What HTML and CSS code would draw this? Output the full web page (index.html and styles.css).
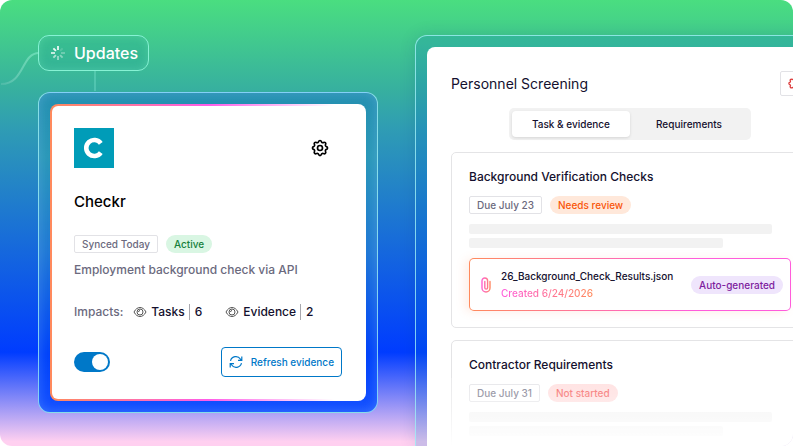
FILE: index.html
```html
<!DOCTYPE html>
<html lang="en">
<head>
    <meta charset="UTF-8">
    <meta name="viewport" content="width=device-width, initial-scale=1.0">
    <title>Personnel Screening</title>
    <link rel="stylesheet" href="styles.css">
</head>
<body>
    <main class="stage">
        <div class="left">
            <div class="updates">
                <svg class="link-line" width="38" height="36" viewBox="0 0 38 36" fill="none">
                    <path d="M0 33C24 33 20 2 38 2" stroke="url(#lineFade)" stroke-width="2"/>
                    <defs>
                        <linearGradient id="lineFade" x1="0" y1="0" x2="1" y2="0">
                            <stop offset="0" stop-color="#fff" stop-opacity="0.1"/>
                            <stop offset="1" stop-color="#8ff5d8" stop-opacity="0.5"/>
                        </linearGradient>
                    </defs>
                </svg>
                <svg width="16" height="16" viewBox="0 0 16 16" stroke="#fff" stroke-width="1.8">
                    <path d="M8 1v4" opacity="0.9"/>
                    <path d="M12.6 3.4l-2.5 2.5" opacity="0.15"/>
                    <path d="M15 8h-4" opacity="0.3"/>
                    <path d="M12.6 12.6l-2.5-2.5" opacity="0.4"/>
                    <path d="M8 15v-4" opacity="0.5"/>
                    <path d="M3.4 12.6l2.5-2.5" opacity="0.6"/>
                    <path d="M1 8h4" opacity="0.8"/>
                    <path d="M3.4 3.4l2.5 2.5" opacity="0.9"/>
                </svg>
                <span>Updates</span>
            </div>

            <section class="frame">
                <div class="card">
                    <div class="card-top">
                        <svg width="40" height="40" viewBox="0 0 40 40" fill="none">
                            <rect width="40" height="40" fill="#009cb8"/>
                            <path d="M26.800 15.400A8 8 0 1 0 26.800 24.600" stroke="#fff" stroke-width="4.600"/>
                        </svg>
                        <button class="icon-btn" aria-label="Settings">
                            <svg width="20" height="20" viewBox="0 0 24 24" fill="none" stroke="#000" stroke-width="2" stroke-linecap="round" stroke-linejoin="round">
                                <path d="M10.3 4.3c.4-1.8 3-1.8 3.4 0a1.7 1.7 0 0 0 2.6 1.1c1.5-.9 3.3.8 2.4 2.4a1.7 1.7 0 0 0 1 2.5c1.8.4 1.8 3 0 3.4a1.7 1.7 0 0 0-1 2.6c.9 1.5-.9 3.3-2.4 2.4a1.7 1.7 0 0 0-2.6 1c-.4 1.8-3 1.8-3.4 0a1.7 1.7 0 0 0-2.6-1c-1.5.9-3.3-.9-2.4-2.4a1.7 1.7 0 0 0-1-2.6c-1.8-.4-1.8-3 0-3.4a1.7 1.7 0 0 0 1-2.5c-.9-1.6.9-3.3 2.4-2.4 1 .6 2.3.1 2.6-1.1z"/>
                                <circle cx="12" cy="12" r="3"/>
                            </svg>
                        </button>
                    </div>
                    <h1>Checkr</h1>
                    <div class="chips">
                        <span class="chip">Synced Today</span>
                        <span class="chip pill green">Active</span>
                    </div>
                    <p class="desc">Employment background check via API</p>
                    <div class="impacts">
                        <span class="impacts-label">Impacts:</span>
                        <div class="impact">
                            <svg width="14" height="12" viewBox="0 0 14 12" fill="none" stroke="#555" stroke-width="1">
                                <path d="M1 6C2.600 3 4.600 1.500 7 1.500S11.400 3 13 6C11.400 9 9.400 10.500 7 10.500S2.600 9 1 6z"/>
                                <circle cx="7" cy="6" r="3"/>
                                <path d="M5.500 6A1.500 1.500 0 0 1 7 4.500"/>
                            </svg>
                            <span>Tasks</span>
                            <span class="count">6</span>
                        </div>
                        <div class="impact">
                            <svg width="14" height="12" viewBox="0 0 14 12" fill="none" stroke="#555" stroke-width="1">
                                <path d="M1 6C2.600 3 4.600 1.500 7 1.500S11.400 3 13 6C11.400 9 9.400 10.500 7 10.500S2.600 9 1 6z"/>
                                <circle cx="7" cy="6" r="3"/>
                                <path d="M5.500 6A1.500 1.500 0 0 1 7 4.500"/>
                            </svg>
                            <span>Evidence</span>
                            <span class="count">2</span>
                        </div>
                    </div>
                    <div class="card-bottom">
                        <input type="checkbox" class="toggle" aria-label="Enable Checkr" checked>
                        <button class="refresh-btn">
                            <svg width="14" height="14" viewBox="0 0 14 14" fill="none" stroke="#0078c8" stroke-width="1.200">
                                <path d="M1.500 5.800A5.500 5.500 0 0 1 11.500 4.200L12.800 5.400M12.800 1.500V5.400H9"/>
                                <path d="M12.500 8.200A5.500 5.500 0 0 1 2.500 9.800L1.200 8.600M1.200 12.500V8.600H5"/>
                            </svg>
                            Refresh evidence
                        </button>
                    </div>
                </div>
            </section>
        </div>

        <section class="frame screening">
            <div class="panel">
                <div class="panel-header">
                    <h2>Personnel Screening</h2>
                    <button class="alert-btn" aria-label="Panel settings">
                        <svg width="15" height="15" viewBox="0 0 24 24" fill="none" stroke="#dc3c3c" stroke-width="2">
                            <path d="M10.3 4.3c.4-1.8 3-1.8 3.4 0a1.7 1.7 0 0 0 2.6 1.1c1.5-.9 3.3.8 2.4 2.4a1.7 1.7 0 0 0 1 2.5c1.8.4 1.8 3 0 3.4a1.7 1.7 0 0 0-1 2.6c.9 1.5-.9 3.3-2.4 2.4a1.7 1.7 0 0 0-2.6 1c-.4 1.8-3 1.8-3.4 0a1.7 1.7 0 0 0-2.6-1c-1.5.9-3.3-.9-2.4-2.4a1.7 1.7 0 0 0-1-2.6c-1.8-.4-1.8-3 0-3.4a1.7 1.7 0 0 0 1-2.5c-.9-1.6.9-3.3 2.4-2.4 1 .6 2.3.1 2.6-1.1z"/>
                        </svg>
                    </button>
                </div>
                <div class="tabs">
                    <button class="tab active">Task &amp; evidence</button>
                    <button class="tab">Requirements</button>
                </div>
                <article class="task">
                    <h3>Background Verification Checks</h3>
                    <div class="chips">
                        <span class="chip">Due July 23</span>
                        <span class="chip pill orange">Needs review</span>
                    </div>
                    <div class="lines">
                        <div class="line"></div>
                        <div class="line short"></div>
                    </div>
                    <div class="file">
                        <svg width="10" height="16" viewBox="0 0 10 16" fill="none" stroke="url(#clipFade)" stroke-width="1.400" stroke-linecap="round">
                            <path d="M9 4.500V11A4 4 0 0 1 1 11V3.800A2.800 2.800 0 0 1 6.600 3.800V10.700A1.400 1.400 0 0 1 3.800 10.700V4.500"/>
                            <defs>
                                <linearGradient id="clipFade" x1="0" y1="0" x2="10" y2="0" gradientUnits="userSpaceOnUse">
                                    <stop stop-color="#ff5cdc"/>
                                    <stop offset="1" stop-color="#ff8a5c"/>
                                </linearGradient>
                            </defs>
                        </svg>
                        <div class="file-info">
                            <div class="file-name">26_Background_Check_Results.json</div>
                            <div class="file-date">Created 6/24/2026</div>
                        </div>
                        <span class="chip pill purple">Auto-generated</span>
                    </div>
                </article>
                <article class="task">
                    <h3>Contractor Requirements</h3>
                    <div class="chips">
                        <span class="chip">Due July 31</span>
                        <span class="chip pill red">Not started</span>
                    </div>
                    <div class="lines">
                        <div class="line"></div>
                        <div class="line short"></div>
                    </div>
                </article>
            </div>
        </section>
    </main>
</body>
</html>
```
FILE: styles.css
```css
* { margin: 0; padding: 0; box-sizing: border-box; }
body {
    font-family: Inter, "Liberation Sans", sans-serif;
    font-weight: 500;
    color: #14102e;
    background: white;
}
button { font: inherit; color: inherit; cursor: pointer; }
svg { display: block; flex: none; }
.stage {
    display: flex;
    gap: 37px;
    height: 100vh;
    padding: 35px 0 0 38px;
    border-radius: 12px;
    overflow: hidden;
    background: linear-gradient(180deg, #4ade80 0%, #37b09f 20%, #2f9cb4 29%, #003cff 79%, #ffd0f0 99%);
}
.left { flex: none; width: 340px; }

.updates {
    position: relative;
    display: flex;
    align-items: center;
    gap: 8px;
    width: 111px;
    height: 36px;
    margin-bottom: 21px;
    padding-left: 11px;
    border: 1px solid #86f2d4;
    border-radius: 11px;
    background: rgba(40, 170, 150, 0.35);
    box-shadow: inset 0 0 8px rgba(120, 240, 190, 0.3);
    color: white;
    font-size: 16px;
}
.updates::after {
    content: '';
    position: absolute;
    top: 100%;
    left: 50%;
    width: 2px;
    height: 21px;
    background: rgba(140, 240, 220, 0.3);
}
.link-line { position: absolute; right: 100%; top: 15px; }

.frame {
    padding: 11px;
    border: 1px solid rgba(160, 240, 245, 0.8);
    border-radius: 12px;
    background: linear-gradient(180deg, #2490b0 0%, #2a98b8 20%, #1f78d6 50%, #0042fa 82%, #1450ff 100%);
    box-shadow: inset 0 0 12px rgba(150, 200, 255, 0.3);
}
.card {
    padding: 22px;
    border: 2px solid transparent;
    border-radius: 8px;
    background:
        linear-gradient(white, white) padding-box,
        linear-gradient(90deg, #ff8a5c 0%, #ff5ce8 50%, white 90%) border-box;
}
.card-top { display: flex; justify-content: space-between; }
.icon-btn {
    display: flex;
    align-items: center;
    justify-content: center;
    width: 44px;
    height: 40px;
    border: none;
    background: none;
}
h1 { margin: 22px 0; font-size: 15px; line-height: 23px; font-weight: 500; color: black; }
.chips { display: flex; gap: 8px; }
.chip {
    height: 18px;
    padding: 0 7px;
    border: 1px solid #e2e2e6;
    border-radius: 2px;
    font-size: 10px;
    line-height: 16px;
    color: #6b6a7e;
    white-space: nowrap;
}
.pill { border-color: transparent; border-radius: 9px; }
.green { background: #d9f6e3; color: #16803c; }
.orange { background: #ffe8da; color: #f9560b; }
.purple { background: #efe5fc; color: #7e1d9e; }
.red { background: #ffdada; color: #f4504e; }
.desc { margin-top: 8px; font-size: 12px; line-height: 18px; color: #6b6a7e; }
.impacts {
    display: flex;
    align-items: center;
    margin: 25px 0 27px;
    font-size: 12px;
    line-height: 16px;
}
.impacts-label { margin-right: 10px; color: #6b6a7e; }
.impact { display: flex; align-items: center; gap: 4px; margin-right: 23px; }
.count { padding-left: 5px; border-left: 1px solid #a8a8ae; }
.card-bottom { display: flex; align-items: center; justify-content: space-between; }
.toggle {
    appearance: none;
    display: flex;
    justify-content: flex-end;
    width: 36px;
    height: 20px;
    padding: 2px;
    border-radius: 10px;
    background: #0078c8;
    cursor: pointer;
}
.toggle::before {
    content: '';
    width: 16px;
    height: 16px;
    border-radius: 50%;
    background: white;
}
.toggle:not(:checked) { justify-content: flex-start; background: #a8a8ae; }
.refresh-btn {
    display: flex;
    align-items: center;
    gap: 8px;
    height: 30px;
    padding: 0 7px;
    border: 1px solid #0078c8;
    border-radius: 4px;
    background: white;
    color: #0078c8;
    font-size: 10px;
}

/* runs off the right and bottom edges of the stage */
.screening {
    flex: 1;
    min-width: 430px;
    margin-right: -52px;
    padding-bottom: 0;
    border-bottom: none;
    border-radius: 12px 12px 0 0;
    background: rgba(0, 110, 200, 0.2);
    box-shadow: 0 0 16px rgba(0, 60, 120, 0.15);
}
.panel {
    position: relative;
    height: 100%;
    padding: 24px;
    border-radius: 8px 8px 0 0;
    background: white;
    overflow: hidden;
}
.panel::after {
    content: '';
    position: absolute;
    left: 0;
    right: 0;
    bottom: 0;
    height: 68px;
    background: linear-gradient(180deg, rgba(255, 255, 255, 0.2), rgba(255, 255, 255, 0.5) 50%, white);
}
.panel-header { display: flex; align-items: center; justify-content: space-between; }
h2 { font-size: 14px; line-height: 24px; font-weight: 400; }
.alert-btn {
    width: 29px;
    height: 25px;
    padding-left: 6px;
    border: 1px solid #e2e2e6;
    border-radius: 2px;
    background: white;
}
.tabs {
    display: flex;
    width: 242px;
    margin: 12px auto;
    padding: 3px;
    border-radius: 5px;
    background: #f2f2f2;
}
.tab {
    flex: 1;
    height: 26px;
    border: none;
    border-radius: 4px;
    background: none;
    font-size: 10px;
}
.tab.active { background: white; box-shadow: 0 1px 3px rgba(0, 0, 0, 0.12); }
.task {
    margin-bottom: 12px;
    padding: 17px 17px 16px;
    border: 1px solid #e4e4e6;
    border-radius: 5px;
}
h3 { margin-bottom: 12px; font-size: 12px; line-height: 14px; font-weight: 500; }
.lines { display: grid; gap: 4px; margin: 10px 0; }
.line { width: 94%; height: 10px; border-radius: 2px; background: #f2f2f2; }
.short { width: 79%; }
.file {
    display: flex;
    align-items: center;
    gap: 10px;
    height: 53px;
    padding: 0 7px 0 11px;
    border: 1px solid transparent;
    border-radius: 5px;
    background:
        linear-gradient(white, white) padding-box,
        linear-gradient(90deg, #ff8a5c, #ff5cdc 70%) border-box;
    box-shadow: -4px 1px 10px rgba(255, 138, 92, 0.15);
}
.file-info { flex: 1; font-size: 10px; line-height: 17px; }
.file-date {
    width: max-content;
    background: linear-gradient(90deg, #ff5cdc, #ff8a5c);
    background-clip: text;
    color: transparent;
}
```
